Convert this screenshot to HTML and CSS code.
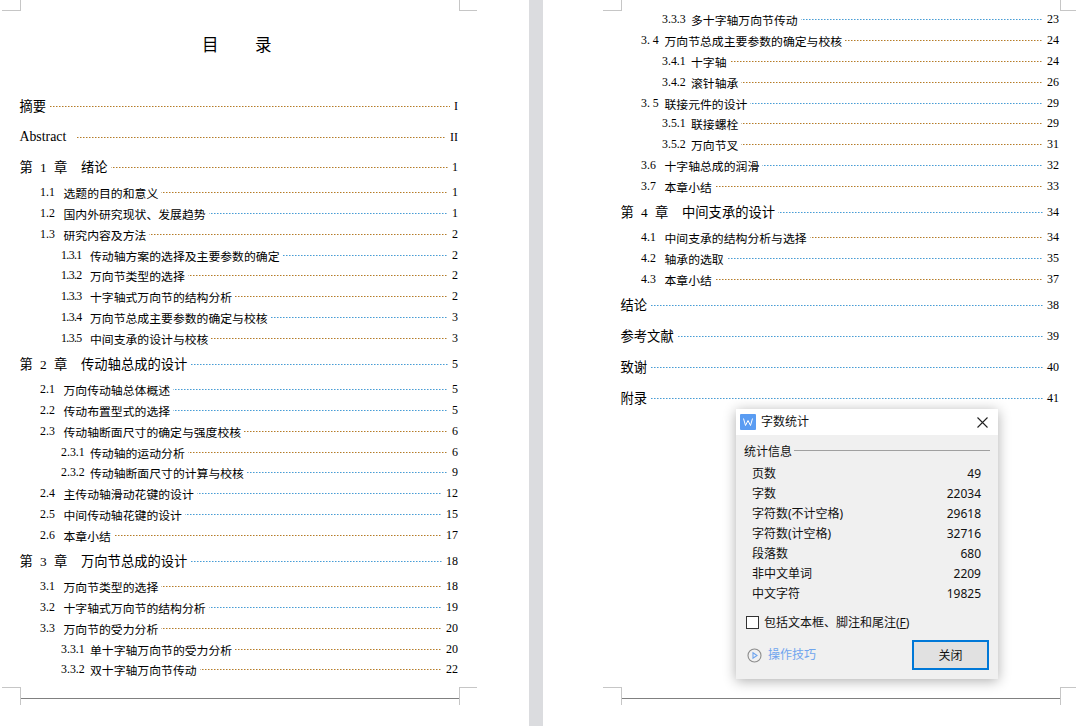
FILE: index.html
```html
<!DOCTYPE html>
<html lang="zh-CN">
<head>
<meta charset="utf-8">
<title>目录</title>
<link rel="stylesheet" href="styles.css">
</head>
<body>
<div class="viewer">
  <section class="page page-left">
    <i class="mark tl"></i><i class="mark tr"></i><i class="mark bl"></i><i class="mark br"></i>
    <div class="sheet sheet-first">
      <h1 class="title"><span>目</span><span>录</span></h1>
      <div class="row top o"><i class="dots"></i><span class="txt">摘要</span><span class="pg">I</span></div>
      <div class="row top gap o"><i class="dots"></i><span class="txt abs">Abstract</span><span class="pg">II</span></div>
      <div class="row top ch gap-s o"><i class="dots"></i><span class="num">第 1 章</span><span class="txt">绪论</span><span class="pg">1</span></div>
      <div class="row sec o"><i class="dots"></i><span class="num">1.1</span><span class="txt">选题的目的和意义</span><span class="pg">1</span></div>
      <div class="row sec b"><i class="dots"></i><span class="num">1.2</span><span class="txt">国内外研究现状、发展趋势</span><span class="pg">1</span></div>
      <div class="row sec o"><i class="dots"></i><span class="num">1.3</span><span class="txt">研究内容及方法</span><span class="pg">2</span></div>
      <div class="row sub b"><i class="dots"></i><span class="num tight">1.3.1</span><span class="txt">传动轴方案的选择及主要参数的确定</span><span class="pg">2</span></div>
      <div class="row sub o snug"><i class="dots"></i><span class="num tight">1.3.2</span><span class="txt">万向节类型的选择</span><span class="pg">2</span></div>
      <div class="row sub o"><i class="dots"></i><span class="num tight">1.3.3</span><span class="txt">十字轴式万向节的结构分析</span><span class="pg">2</span></div>
      <div class="row sub b"><i class="dots"></i><span class="num tight">1.3.4</span><span class="txt">万向节总成主要参数的确定与校核</span><span class="pg">3</span></div>
      <div class="row sub o"><i class="dots"></i><span class="num tight">1.3.5</span><span class="txt">中间支承的设计与校核</span><span class="pg">3</span></div>
      <div class="row top ch b"><i class="dots"></i><span class="num">第 2 章</span><span class="txt">传动轴总成的设计</span><span class="pg">5</span></div>
      <div class="row sec b"><i class="dots"></i><span class="num">2.1</span><span class="txt">万向传动轴总体概述</span><span class="pg">5</span></div>
      <div class="row sec b"><i class="dots"></i><span class="num">2.2</span><span class="txt">传动布置型式的选择</span><span class="pg">5</span></div>
      <div class="row sec o"><i class="dots"></i><span class="num">2.3</span><span class="txt">传动轴断面尺寸的确定与强度校核</span><span class="pg">6</span></div>
      <div class="row sub o"><i class="dots"></i><span class="num">2.3.1</span><span class="txt">传动轴的运动分析</span><span class="pg">6</span></div>
      <div class="row sub b snug"><i class="dots"></i><span class="num">2.3.2</span><span class="txt">传动轴断面尺寸的计算与校核</span><span class="pg">9</span></div>
      <div class="row sec b"><i class="dots"></i><span class="num">2.4</span><span class="txt">主传动轴滑动花键的设计</span><span class="pg">12</span></div>
      <div class="row sec b"><i class="dots"></i><span class="num">2.5</span><span class="txt">中间传动轴花键的设计</span><span class="pg">15</span></div>
      <div class="row sec o"><i class="dots"></i><span class="num">2.6</span><span class="txt">本章小结</span><span class="pg">17</span></div>
      <div class="row top ch b"><i class="dots"></i><span class="num">第 3 章</span><span class="txt">万向节总成的设计</span><span class="pg">18</span></div>
      <div class="row sec o"><i class="dots"></i><span class="num">3.1</span><span class="txt">万向节类型的选择</span><span class="pg">18</span></div>
      <div class="row sec b"><i class="dots"></i><span class="num">3.2</span><span class="txt">十字轴式万向节的结构分析</span><span class="pg">19</span></div>
      <div class="row sec o"><i class="dots"></i><span class="num">3.3</span><span class="txt">万向节的受力分析</span><span class="pg">20</span></div>
      <div class="row sub o"><i class="dots"></i><span class="num">3.3.1</span><span class="txt">单十字轴万向节的受力分析</span><span class="pg">20</span></div>
      <div class="row sub o snug"><i class="dots"></i><span class="num">3.3.2</span><span class="txt">双十字轴万向节传动</span><span class="pg">22</span></div>
    </div>
  </section>
  <div class="divider"></div>
  <section class="page page-right">
    <i class="mark tl"></i><i class="mark tr"></i><i class="mark bl"></i><i class="mark br"></i>
    <div class="sheet sheet-second">
      <div class="row sub b"><i class="dots"></i><span class="num">3.3.3</span><span class="txt">多十字轴万向节传动</span><span class="pg">23</span></div>
      <div class="row sec o"><i class="dots"></i><span class="num">3. 4</span><span class="txt">万向节总成主要参数的确定与校核</span><span class="pg">24</span></div>
      <div class="row sub o"><i class="dots"></i><span class="num">3.4.1</span><span class="txt">十字轴</span><span class="pg">24</span></div>
      <div class="row sub o"><i class="dots"></i><span class="num">3.4.2</span><span class="txt">滚针轴承</span><span class="pg">26</span></div>
      <div class="row sec b"><i class="dots"></i><span class="num">3. 5</span><span class="txt">联接元件的设计</span><span class="pg">29</span></div>
      <div class="row sub o snug"><i class="dots"></i><span class="num">3.5.1</span><span class="txt">联接螺栓</span><span class="pg">29</span></div>
      <div class="row sub o"><i class="dots"></i><span class="num">3.5.2</span><span class="txt">万向节叉</span><span class="pg">31</span></div>
      <div class="row sec b"><i class="dots"></i><span class="num">3.6</span><span class="txt">十字轴总成的润滑</span><span class="pg">32</span></div>
      <div class="row sec o"><i class="dots"></i><span class="num">3.7</span><span class="txt">本章小结</span><span class="pg">33</span></div>
      <div class="row top ch b"><i class="dots"></i><span class="num">第 4 章</span><span class="txt">中间支承的设计</span><span class="pg">34</span></div>
      <div class="row sec o"><i class="dots"></i><span class="num">4.1</span><span class="txt">中间支承的结构分析与选择</span><span class="pg">34</span></div>
      <div class="row sec b"><i class="dots"></i><span class="num">4.2</span><span class="txt">轴承的选取</span><span class="pg">35</span></div>
      <div class="row sec o"><i class="dots"></i><span class="num">4.3</span><span class="txt">本章小结</span><span class="pg">37</span></div>
      <div class="row top b"><i class="dots"></i><span class="txt">结论</span><span class="pg">38</span></div>
      <div class="row top gap b"><i class="dots"></i><span class="txt">参考文献</span><span class="pg">39</span></div>
      <div class="row top gap b"><i class="dots"></i><span class="txt">致谢</span><span class="pg">40</span></div>
      <div class="row top gap b"><i class="dots"></i><span class="txt">附录</span><span class="pg">41</span></div>
    </div>
  </section>
</div>

<div class="dialog">
  <header class="dialog-head">
    <svg class="app-icon" viewBox="0 0 16 16" aria-hidden="true">
      <rect width="16" height="16" rx="1" fill="#5a9cf2"/>
      <path d="M3.5 4.5 L5.5 11.5 L8 6.5 L10.5 11.5 L12.5 4.5" fill="none" stroke="#fff" stroke-width="1"/>
    </svg>
    <span class="dialog-title">字数统计</span>
    <svg class="close-icon" viewBox="0 0 11 11" aria-hidden="true">
      <path d="M0.5 0.5 L10.5 10.5 M10.5 0.5 L0.5 10.5" stroke="#222" stroke-width="1.1" fill="none"/>
    </svg>
  </header>
  <div class="dialog-body">
    <div class="group-head"><span>统计信息</span><i class="group-line"></i></div>
    <dl class="stats">
      <div class="stat"><dt>页数</dt><dd>49</dd></div>
      <div class="stat"><dt>字数</dt><dd>22034</dd></div>
      <div class="stat"><dt>字符数(不计空格)</dt><dd>29618</dd></div>
      <div class="stat"><dt>字符数(计空格)</dt><dd>32716</dd></div>
      <div class="stat"><dt>段落数</dt><dd>680</dd></div>
      <div class="stat"><dt>非中文单词</dt><dd>2209</dd></div>
      <div class="stat"><dt>中文字符</dt><dd>19825</dd></div>
    </dl>
    <label class="check"><i class="box"></i><span>包括文本框、脚注和尾注(<u>F</u>)</span></label>
    <div class="dialog-foot">
      <span class="tips">
        <svg class="tips-icon" viewBox="0 0 15 15" aria-hidden="true">
          <circle cx="7.5" cy="7.5" r="6.5" fill="none" stroke="#8c8c8c" stroke-width="1.1"/>
          <path d="M6 4.8 L10 7.5 L6 10.2 Z" fill="none" stroke="#6fa5ee" stroke-width="1.1"/>
        </svg>
        操作技巧
      </span>
      <button class="close-btn" type="button">关闭</button>
    </div>
  </div>
</div>
</body>
</html>
```
FILE: styles.css
```css
* { box-sizing: border-box; }
html, body { margin: 0; padding: 0; }
body {
  width: 1076px;
  height: 726px;
  overflow: hidden;
  background: #fff;
  position: relative;
  font-family: "Liberation Serif", "Noto Sans CJK SC", serif;
  color: #000;
}
.viewer { display: flex; height: 726px; }
.page { position: relative; height: 726px; background: #fff; flex: none; }
.page-left { width: 529px; padding-left: 20px; }
.page-right { width: 533px; padding-left: 78px; flex: 1; }
.divider { width: 14px; flex: none; background: #dbdcdf; }
.sheet { width: 439px; height: 699px; border-bottom: 1px solid #808080; }
.sheet-first { padding-top: 36px; }
.sheet-second { padding-top: 8px; }

.title {
  margin: 0 0 39px;
  height: 20px;
  display: flex;
  justify-content: center;
  gap: 36.5px;
  padding-right: 5.5px;
  font-size: 16.5px;
  line-height: 20px;
  font-weight: 400;
}

.row {
  position: relative;
  display: flex;
  align-items: center;
  height: 21px;
  font-size: 11.85px;
  white-space: pre;
}
.top { font-size: 13.3px; margin-top: 5px; }
.title + .top { margin-top: 0; }
.gap { margin-top: 10px; }
.gap-s { margin-top: 9px; }
.snug { margin-top: -1px; }
.ch { margin-bottom: 4px; }
.ch > .num, .ch > .txt { margin-bottom: 1px; }
.sec { padding-left: 20px; }
.sub { padding-left: 41px; }
.sec > span, .sub > span { margin-top: 2px; }
.num, .txt, .pg { position: relative; flex: none; background: #fff; }
.sec .num { width: 23.5px; }
.sub .num { width: 29px; }
.ch .num { width: 61.5px; word-spacing: 4px; margin-left: -0.5px; }
.tight { letter-spacing: -0.6px; }
.txt { padding-right: 3px; }
.top > .txt:first-of-type { margin-left: -0.5px; }
.ch > .txt:first-of-type { margin-left: 0; }
.abs { padding-right: 10px; font-size: 13.8px; }
.dots {
  position: absolute;
  left: 0;
  right: 0;
  top: 11px;
  height: 1px;
  background-size: 3px 1px;
}
.sec .dots { left: 20px; }
.sub .dots { left: 41px; }
.o .dots { background-image: linear-gradient(to right, #c07c1c 0 1px, #c9bda8 1px 2px, transparent 2px); }
.b .dots { background-image: linear-gradient(to right, #3f9fdf 0 1px, #aac6d8 1px 2px, transparent 2px); }
.pg { margin-left: auto; margin-top: 2px; padding: 0 1px 0 4px; font-size: 12px; }

.mark { position: absolute; display: block; width: 18px; height: 11px; border: 0 solid #c6c6c6; }
.mark.tl { top: 0; height: 11px; border-right-width: 1px; border-bottom-width: 1px; }
.mark.tr { top: 0; height: 11px; border-left-width: 1px; border-bottom-width: 1px; }
.mark.bl { top: 687px; height: 18px; border-right-width: 1px; border-top-width: 1px; }
.mark.br { top: 687px; height: 18px; border-left-width: 1px; border-top-width: 1px; }
.page-left .mark.tl, .page-left .mark.bl { left: 2px; width: 18.5px; }
.page-left .mark.tr, .page-left .mark.br { left: 459px; }
.page-right .mark.tl, .page-right .mark.bl { left: 60px; width: 18.5px; }
.page-right .mark.tr, .page-right .mark.br { left: 517px; }

.dialog {
  position: absolute;
  left: 736px;
  top: 409px;
  width: 262px;
  height: 270px;
  background: #f0f0f0;
  box-shadow: 0 2px 12px rgba(0, 0, 0, 0.32);
  font-family: "Noto Sans", "Noto Sans CJK SC", sans-serif;
  font-size: 12px;
  color: #111;
}
.dialog-head {
  height: 26px;
  background: #fff;
  display: flex;
  align-items: center;
  padding: 0 10px 0 4px;
}
.app-icon { width: 16px; height: 16px; flex: none; margin-right: 5px; }
.dialog-title { flex: 1; font-family: "Noto Sans CJK SC", sans-serif; line-height: 16px; margin-top: -2px; }
.close-icon { width: 11px; height: 11px; flex: none; }
.dialog-body { padding: 7px 8px 0; }
.group-head { display: flex; align-items: center; height: 17px; gap: 2px; }
.group-line { flex: 1; height: 1px; background: #a0a0a0; }
.stats { margin: 4px 0 0; padding: 0 9px 0 8px; }
.stat { display: flex; justify-content: space-between; align-items: center; height: 20px; }
.stat dt, .stat dd { margin: 0; }
.check { display: flex; align-items: center; gap: 5px; margin: 11px 0 0 2px; height: 16px; }
.box { display: block; width: 13px; height: 13px; border: 1px solid #333; background: #fff; flex: none; }
.check u { text-underline-offset: 1px; }
.dialog-foot { display: flex; justify-content: space-between; align-items: center; margin-top: 10px; padding-left: 3px; }
.tips { display: flex; align-items: center; gap: 6px; color: #6fa5ee; line-height: 16px; }
.tips-icon { width: 15px; height: 15px; flex: none; }
.close-btn {
  width: 77px;
  height: 30px;
  margin-right: 1px;
  border: 2px solid #0078d7;
  background: #e1e1e1;
  font: inherit;
  color: #111;
  padding: 0;
}
```
